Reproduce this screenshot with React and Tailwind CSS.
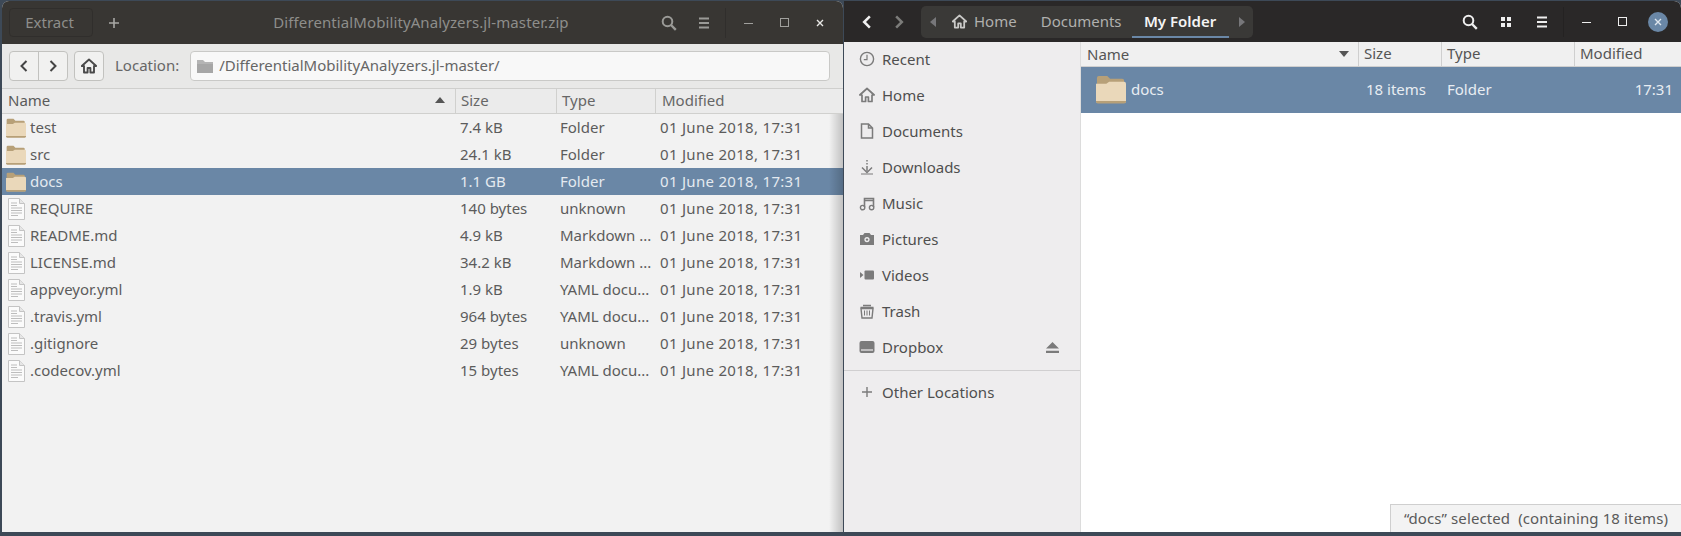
import React from "react";

const FONT = "font-['Noto_Sans','Open_Sans',sans-serif]";

const Folder = ({ className }) => (
  <svg viewBox="0 0 32 30" preserveAspectRatio="none" className={className}>
    <path d="M1 3a2 2 0 0 1 2-2h9l3 3h13a2 2 0 0 1 2 2v9H1z" fill="#b7a078" />
    <path d="M0 9h11l3-2h16a2 2 0 0 1 2 2v18a2 2 0 0 1-2 2H2a2 2 0 0 1-2-2z" fill="#ead8ba" />
    <path d="M0 27h32v0.5a2 2 0 0 1-2 2H2a2 2 0 0 1-2-2z" fill="#b7a078" />
  </svg>
);

const FileIcon = () => (
  <svg viewBox="0 0 17 22" className="h-[22px] w-[17px] shrink-0">
    <path d="M0.5 0.5h11l5 5v16h-16z" fill="#fbfbfb" stroke="#c4c4c4" />
    <path d="M11.5 0.5v5h5" fill="#e6e6e6" stroke="#c4c4c4" />
    <path
      d="M3 5h6M3 7.5h6M3 10h11M3 12.5h11M3 15h11M3 17.5h7"
      stroke="#bdbdbd"
      strokeWidth="1"
    />
  </svg>
);

const HomeIcon = ({ color = "#4a4a4a", size = 16 }) => (
  <svg viewBox="0 0 16 16" width={size} height={size} className="shrink-0">
    <path
      d="M8 1.5 0.8 8h2.2v6.5h3.6V10h2.8v4.5H13V8h2.2z"
      fill="none"
      stroke={color}
      strokeWidth="1.9"
      strokeLinejoin="round"
    />
  </svg>
);

const Chevron = ({ dir = "left", color = "#444", size = 14, width = 2 }) => (
  <svg viewBox="0 0 14 14" width={size} height={size} className="shrink-0">
    <path
      d={dir === "left" ? "M9.5 2 4.5 7l5 5" : "M4.5 2l5 5-5 5"}
      fill="none"
      stroke={color}
      strokeWidth={width}
    />
  </svg>
);

const Search = ({ color }) => (
  <svg viewBox="0 0 16 16" width="16" height="16" className="shrink-0">
    <circle cx="6.5" cy="6.5" r="4.8" fill="none" stroke={color} strokeWidth="2" />
    <path d="M10 10l4.8 4.8" stroke={color} strokeWidth="2.4" />
  </svg>
);

const Burger = ({ color }) => (
  <svg viewBox="0 0 12 12" width="12" height="12" className="shrink-0">
    <path d="M1 1.5h10M1 6h10M1 10.5h10" stroke={color} strokeWidth="2" />
  </svg>
);

const WindowButtons = ({ color, focused }) => (
  <div className="ml-[15px] flex items-center">
    <div className="mr-[4px] h-[30px] w-px bg-[#00000022]" />
    <div className="flex w-[36px] justify-center">
      <div className="mt-px h-px w-[9px]" style={{ background: color }} />
    </div>
    <div className="flex w-[36px] justify-center">
      <div className="h-[9px] w-[9px] border" style={{ borderColor: color }} />
    </div>
    <div className="flex w-[36px] justify-center">
      <div
        className={
          "flex h-5 w-5 items-center justify-center rounded-full" +
          (focused ? " bg-[#6a87a6]" : "")
        }
      >
        <svg viewBox="0 0 8 8" width="8" height="8">
          <path d="M1 1l6 6M7 1 1 7" stroke={focused ? "#dfe6ee" : "#e8e8e6"} strokeWidth="1.4" />
        </svg>
      </div>
    </div>
  </div>
);

const archiveRows = [
  ["test", "7.4 kB", "Folder", true],
  ["src", "24.1 kB", "Folder", true],
  ["docs", "1.1 GB", "Folder", true, true],
  ["REQUIRE", "140 bytes", "unknown"],
  ["README.md", "4.9 kB", "Markdown ..."],
  ["LICENSE.md", "34.2 kB", "Markdown ..."],
  ["appveyor.yml", "1.9 kB", "YAML docu..."],
  [".travis.yml", "964 bytes", "YAML docu..."],
  [".gitignore", "29 bytes", "unknown"],
  [".codecov.yml", "15 bytes", "YAML docu..."],
];

const ArchiveWindow = () => (
  <div className="flex h-full w-[841px] shrink-0 flex-col overflow-hidden rounded-t-[7px] bg-[#f2f2f2]">
    <div className="flex h-[43px] shrink-0 items-center bg-[#383633] pl-[7px] pr-[5px] text-[#8e8e8b]">
      <div className="flex h-[29px] w-[84px] items-center justify-center rounded-[4px] border border-[#302e2c] pr-[3px] text-[15px] text-[#8e8e8b]">
        Extract
      </div>
      <svg viewBox="0 0 10 10" width="10" height="10" className="ml-[16px]">
        <path d="M5 0v10M0 5h10" stroke="#a8a8a5" strokeWidth="1.6" />
      </svg>
      <div className="flex-1 pl-[62px] text-center text-[15px] tracking-[0.1px]">
        DifferentialMobilityAnalyzers.jl-master.zip
      </div>
      <div className="mr-[21px]">
        <Search color="#9a9a97" />
      </div>
      <Burger color="#9a9a97" />
      <WindowButtons color="#a0a09d" />
    </div>
    <div className="flex h-[45px] shrink-0 items-center border-b border-[#cfcfcd] bg-[#e8e8e7] pl-[7px] pr-[13px]">
      <div className="flex h-[30px] w-[59px] rounded-[4px] border border-[#c2c2bf] bg-[#f1f1f0]">
        <div className="flex w-[29px] items-center justify-center border-r border-[#c2c2bf]">
          <Chevron dir="left" />
        </div>
        <div className="flex flex-1 items-center justify-center">
          <Chevron dir="right" />
        </div>
      </div>
      <div className="ml-[6px] flex h-[30px] w-[30px] items-center justify-center rounded-[4px] border border-[#c2c2bf] bg-[#f1f1f0]">
        <HomeIcon />
      </div>
      <div className="ml-[11px] pb-[2px] text-[15px] text-[#666]">Location:</div>
      <div className="ml-[11px] flex h-[30px] flex-1 items-center rounded-[4px] border border-[#c9c9c7] bg-[#f8f8f8] pl-[6px] text-[15px] text-[#666]">
        <svg viewBox="0 0 16 14" width="16" height="14" className="mr-[6px] shrink-0">
          <path d="M0 1h6l2 2h8v2H0z" fill="#b4b4b4" />
          <path d="M0 5h16v9H0z" fill="#a6a6a6" />
        </svg>
        <span className="pb-[2px]">/DifferentialMobilityAnalyzers.jl-master/</span>
      </div>
    </div>
    <div className="flex h-[25px] shrink-0 items-start border-b border-[#d0d0ce] bg-[#ebebeb] text-[15px] leading-[22px] text-[#666]">
      <div className="flex w-[453px] items-center justify-between pl-[6px] pr-[10px] text-[#5a5a5a]">
        Name
        <svg viewBox="0 0 10 6" width="10" height="6">
          <path d="M0 6 5 0l5 6z" fill="#555" />
        </svg>
      </div>
      <div className="h-full w-[101px] border-l border-[#d0d0ce] pl-[5px]">Size</div>
      <div className="h-full w-[99px] border-l border-[#d0d0ce] pl-[5px]">Type</div>
      <div className="h-full flex-1 border-l border-[#d0d0ce] pl-[6px]">Modified</div>
    </div>
    <div className="relative flex-1">
      {archiveRows.map(([name, size, type, isFolder, selected]) => (
        <div
          key={name}
          className={
            "flex h-[27px] items-center text-[15px] " +
            (selected ? "bg-[#6a87a6] text-[#e4eaf0]" : "text-[#5c5c5c]")
          }
        >
          <div className="flex w-[453px] items-center">
            {isFolder ? (
              <div className="flex w-[28px] shrink-0 pl-[4px]">
                <Folder className="h-[20px] w-[20px]" />
              </div>
            ) : (
              <div className="flex w-[28px] shrink-0 pl-[6px]">
                <FileIcon />
              </div>
            )}
            {name}
          </div>
          <div className="w-[100px] pl-[5px]">{size}</div>
          <div className="w-[100px] whitespace-nowrap pl-[5px]">{type}</div>
          <div className="flex-1 pl-[5px] tracking-[0.3px]">01 June 2018, 17:31</div>
        </div>
      ))}
      <div className="absolute inset-y-0 right-0 w-[14px] bg-gradient-to-l from-[#00000033] to-transparent" />
    </div>
  </div>
);

const SideIcon = ({ name }) => {
  const c = "#7b7b7b";
  const icons = {
    recent: (
      <>
        <circle cx="8" cy="8" r="6.6" fill="none" stroke={c} strokeWidth="1.4" />
        <path d="M8 3.8V8.6H4.8" fill="none" stroke={c} strokeWidth="1.2" />
      </>
    ),
    home: (
      <path
        d="M8 1.5 0.8 8H3v6.5h3.6V10h2.8v4.5H13V8h2.2z"
        fill="none"
        stroke={c}
        strokeWidth="1.7"
        strokeLinejoin="round"
      />
    ),
    documents: (
      <path
        d="M2.5 1h7l4 4v10h-11zM9.5 1v4h4"
        fill="none"
        stroke={c}
        strokeWidth="1.5"
      />
    ),
    downloads: (
      <>
        <path d="M8 1v1.5M8 4v1.5M8 7v5" stroke={c} strokeWidth="1.5" />
        <path d="M3 8.5 8 13.5l5-5" fill="none" stroke={c} strokeWidth="1.5" />
        <path d="M2 15h12" stroke={c} strokeWidth="1.2" />
      </>
    ),
    music: (
      <>
        <path d="M5.5 12V3.5h9V12M5.5 5.5h9" fill="none" stroke={c} strokeWidth="1.6" />
        <circle cx="3.6" cy="12.6" r="2.2" fill="none" stroke={c} strokeWidth="1.4" />
        <circle cx="12.6" cy="12.6" r="2.2" fill="none" stroke={c} strokeWidth="1.4" />
      </>
    ),
    pictures: (
      <>
        <path d="M1 4h3l1.5-2h5L12 4h3v10H1z" fill={c} />
        <circle cx="8" cy="8.6" r="2.6" fill="#eeedee" />
        <circle cx="8" cy="8.6" r="1.2" fill={c} />
      </>
    ),
    videos: (
      <>
        <rect x="5.5" y="3.5" width="9.5" height="9" rx="1" fill={c} />
        <path d="M1 5l3.5 3L1 11z" fill={c} />
      </>
    ),
    trash: (
      <>
        <path d="M4 2.5h8M1.5 4.5h13" stroke={c} strokeWidth="1.4" />
        <path
          d="M2 5.5 3 15h10l1-9.5z"
          fill="none"
          stroke={c}
          strokeWidth="1.4"
        />
        <path d="M5.5 7.5v5M8 7.5v5M10.5 7.5v5" stroke={c} strokeWidth="1" />
      </>
    ),
    dropbox: (
      <>
        <rect x="0.5" y="2" width="15" height="12" rx="2" fill={c} />
        <path d="M2 11h12" stroke="#eeedee" strokeWidth="1.2" />
      </>
    ),
    plus: <path d="M8 3v10M3 8h10" stroke={c} strokeWidth="1.4" />,
  };
  return (
    <svg viewBox="0 0 16 16" width="16" height="16" className="shrink-0">
      {icons[name]}
    </svg>
  );
};

const places = [
  ["recent", "Recent"],
  ["home", "Home"],
  ["documents", "Documents"],
  ["downloads", "Downloads"],
  ["music", "Music"],
  ["pictures", "Pictures"],
  ["videos", "Videos"],
  ["trash", "Trash"],
  ["dropbox", "Dropbox"],
];

const Sidebar = () => (
  <div className="w-[237px] shrink-0 border-r border-[#dcdcdc] bg-[#eeedee] text-[15px] text-[#4f4f4f]">
    {places.map(([icon, label]) => (
      <div key={icon} className="flex h-[36px] items-center pb-[2px] pl-[15px] pr-[21px]">
        <SideIcon name={icon} />
        <span className="ml-[7px] flex-1">{label}</span>
        {icon === "dropbox" && (
          <svg viewBox="0 0 12 10" width="13" height="11">
            <path d="M6 0l6 6H0zM0 8h12v2H0z" fill="#7b7b7b" />
          </svg>
        )}
      </div>
    ))}
    <div className="mt-[4px] border-t border-[#d0cfd0] pt-[4px]">
      <div className="flex h-[36px] items-center pb-[2px] pl-[15px]">
        <SideIcon name="plus" />
        <span className="ml-[7px]">Other Locations</span>
      </div>
    </div>
  </div>
);

const FilesWindow = () => (
  <div className="flex h-full min-w-0 flex-1 flex-col overflow-hidden rounded-tr-[7px] bg-white">
    <div className="flex h-[41px] shrink-0 items-center bg-[#2a2828] pl-[15px] pr-[5px]">
      <Chevron dir="left" color="#f0f0f0" size={16} width={2.2} />
      <div className="ml-[16px]">
        <Chevron dir="right" color="#7c7c7a" size={16} width={2.2} />
      </div>
      <div className="ml-[14px] flex h-[32px] w-[332px] items-center rounded-[5px] bg-[#3a3937] text-[15px] text-[#b0b0ae]">
        <svg viewBox="0 0 6 10" width="6" height="10" className="ml-[9px]">
          <path d="M6 0v10L0 5z" fill="#77777a" />
        </svg>
        <div className="ml-[16px] flex items-center">
          <HomeIcon color="#c9c9c7" size={15} />
          <span className="ml-[7px]">Home</span>
        </div>
        <span className="ml-[24px]">Documents</span>
        <div className="relative ml-[10px] flex h-full w-[97px] items-center justify-center font-semibold text-[#f4f4f4]">
          My Folder
          <div className="absolute inset-x-0 bottom-0 h-[2px] bg-[#6a87a6]" />
        </div>
        <svg viewBox="0 0 6 10" width="6" height="10" className="ml-[10px]">
          <path d="M0 0v10l6-5z" fill="#77777a" />
        </svg>
      </div>
      <div className="flex-1" />
      <Search color="#eeeeee" />
      <svg viewBox="0 0 10 10" width="10" height="10" className="ml-[23px]">
        <path d="M0 0h4v4H0zM6 0h4v4H6zM0 6h4v4H0zM6 6h4v4H6z" fill="#eeeeee" />
      </svg>
      <div className="ml-[25px]">
        <Burger color="#eeeeee" />
      </div>
      <WindowButtons color="#eeeeee" focused />
    </div>
    <div className="flex min-h-0 flex-1">
      <Sidebar />
      <div className="relative flex-1">
        <div className="flex h-[25px] items-center border-b border-[#cfcfcf] bg-[#f0f0f0] text-[15px] text-[#555]">
          <div className="flex w-[277px] items-center justify-between pl-[6px] pr-[9px]">
            Name
            <svg viewBox="0 0 10 6" width="10" height="6">
              <path d="M0 0h10L5 6z" fill="#555" />
            </svg>
          </div>
          <div className="h-full w-[83px] border-l border-[#cfcfcf] pl-[5px]">Size</div>
          <div className="h-full w-[133px] border-l border-[#cfcfcf] pl-[5px]">Type</div>
          <div className="h-full flex-1 border-l border-[#cfcfcf] pl-[5px]">Modified</div>
        </div>
        <div className="flex h-[46px] items-center bg-[#6a87a6] pb-[2px] text-[15px] text-[#e8edf2]">
          <div className="flex w-[277px] items-center pl-[15px]">
            <Folder className="h-[29px] w-[30px]" />
            <span className="ml-[5px]">docs</span>
          </div>
          <div className="w-[83px] pl-[8px]">18 items</div>
          <div className="flex-1 pl-[6px]">Folder</div>
          <div className="pr-[8px]">17:31</div>
        </div>
        <div className="absolute bottom-0 right-0 flex h-[28px] w-[291px] items-center justify-center border-l border-t border-[#cfcfcf] bg-[#f3f3f3] text-[15px] tracking-[0.1px] text-[#5a5a5a]">
          <span className="whitespace-pre">“docs” selected  (containing 18 items)</span>
        </div>
      </div>
    </div>
  </div>
);

export default function App() {
  return (
    <div className={"flex h-[536px] w-[1681px] overflow-hidden bg-[#3d4957] pb-[4px] pl-[2px] pt-[1px] " + FONT}>
      <ArchiveWindow />
      <div className="w-px shrink-0" />
      <FilesWindow />
    </div>
  );
}
